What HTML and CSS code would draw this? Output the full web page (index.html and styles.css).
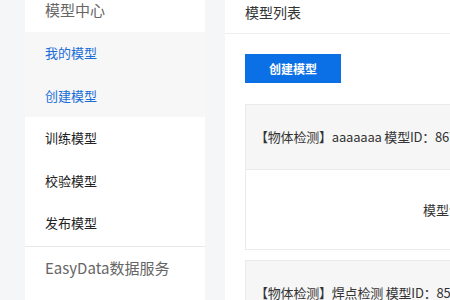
FILE: index.html
```html
<!DOCTYPE html>
<html lang="zh-CN">
<head>
      <meta charset="UTF-8">
      <meta name="viewport" content="width=device-width, initial-scale=1.0">
      <title>模型列表</title>
      <link rel="stylesheet" href="styles.css">
</head>
<body>
      <div class="page">
            <div class="sidebar">
                  <div class="sidebar-title">模型中心</div>
                  <ul class="menu menu-active">
                        <li class="link">我的模型</li>
                        <li class="link">创建模型</li>
                  </ul>
                  <ul class="menu">
                        <li>训练模型</li>
                        <li>校验模型</li>
                        <li>发布模型</li>
                  </ul>
                  <div class="sidebar-section">EasyData数据服务</div>
            </div>
            <div class="main">
                  <div class="main-header">模型列表</div>
                  <div class="main-body">
                        <button class="btn-create">创建模型</button>
                        <div class="card">
                              <div class="card-header">【物体检测】aaaaaaa 模型ID：867432</div>
                              <div class="card-body">模型创建成功，请开始训练</div>
                        </div>
                        <div class="card">
                              <div class="card-header">【物体检测】焊点检测 模型ID：856211</div>
                              <div class="card-body">模型创建成功，请开始训练</div>
                        </div>
                  </div>
            </div>
      </div>
</body>
</html>
```

FILE: styles.css
```css
*{
      box-sizing: border-box;
}

body{
      margin: 0;
      background: #f5f6f8;
      font-family: "Noto Sans CJK SC", "Liberation Sans", sans-serif;
      overflow: hidden;
}
.page{
      display: flex;
      padding-left: 25px;
      gap: 20px;
      height: 300px;
}
.sidebar{
      width: 180px;
      flex-shrink: 0;
      background: #fff;
}
.sidebar-title{
      height: 32px;
      line-height: 20px;
      padding-left: 20px;
      font-size: 15px;
      color: #666;
}
.menu{
      margin: 0;
      padding: 0;
      list-style: none;
}
.menu li{
      height: 42.5px;
      line-height: 42px;
      padding-left: 20px;
      font-size: 13px;
      color: #222;
}
.menu-active{
      background: #f7f7f8;
}
.menu li.link{
      color: #1a6dd6;
}
.sidebar-section{
      border-top: 1px solid #e8e8e8;
      margin-top: 1px;
      height: 46px;
      line-height: 42px;
      padding-left: 20px;
      font-size: 15px;
      color: #666;
}
.main{
      width: 560px;
      flex-shrink: 0;
      background: #fff;
}
.main-header{
      height: 34px;
      line-height: 24px;
      padding-left: 20px;
      font-size: 14px;
      color: #333;
      border-bottom: 1px solid #eee;
}
.main-body{
      padding: 20px 20px 0 20px;
}
.btn-create{
      display: block;
      width: 96px;
      height: 29px;
      appearance: none;
      border: none;
      border-radius: 0;
      background: #0b6fe6;
      color: #fff;
      font-family: inherit;
      font-size: 12px;
      font-weight: bold;
      cursor: pointer;
}
.card{
      margin-top: 21px;
      width: 512px;
      border: 1px solid #ebebeb;
}
.card + .card{
      margin-top: 10px;
}
.card-header{
      height: 65px;
      line-height: 64px;
      padding-left: 9px;
      background: #f6f6f6;
      border-bottom: 1px solid #ebebeb;
      font-size: 13px;
      letter-spacing: -0.2px;
      color: #333;
      white-space: nowrap;
}
.card-body{
      height: 79px;
      line-height: 80px;
      text-align: center;
      font-size: 13px;
      color: #333;
}
```
